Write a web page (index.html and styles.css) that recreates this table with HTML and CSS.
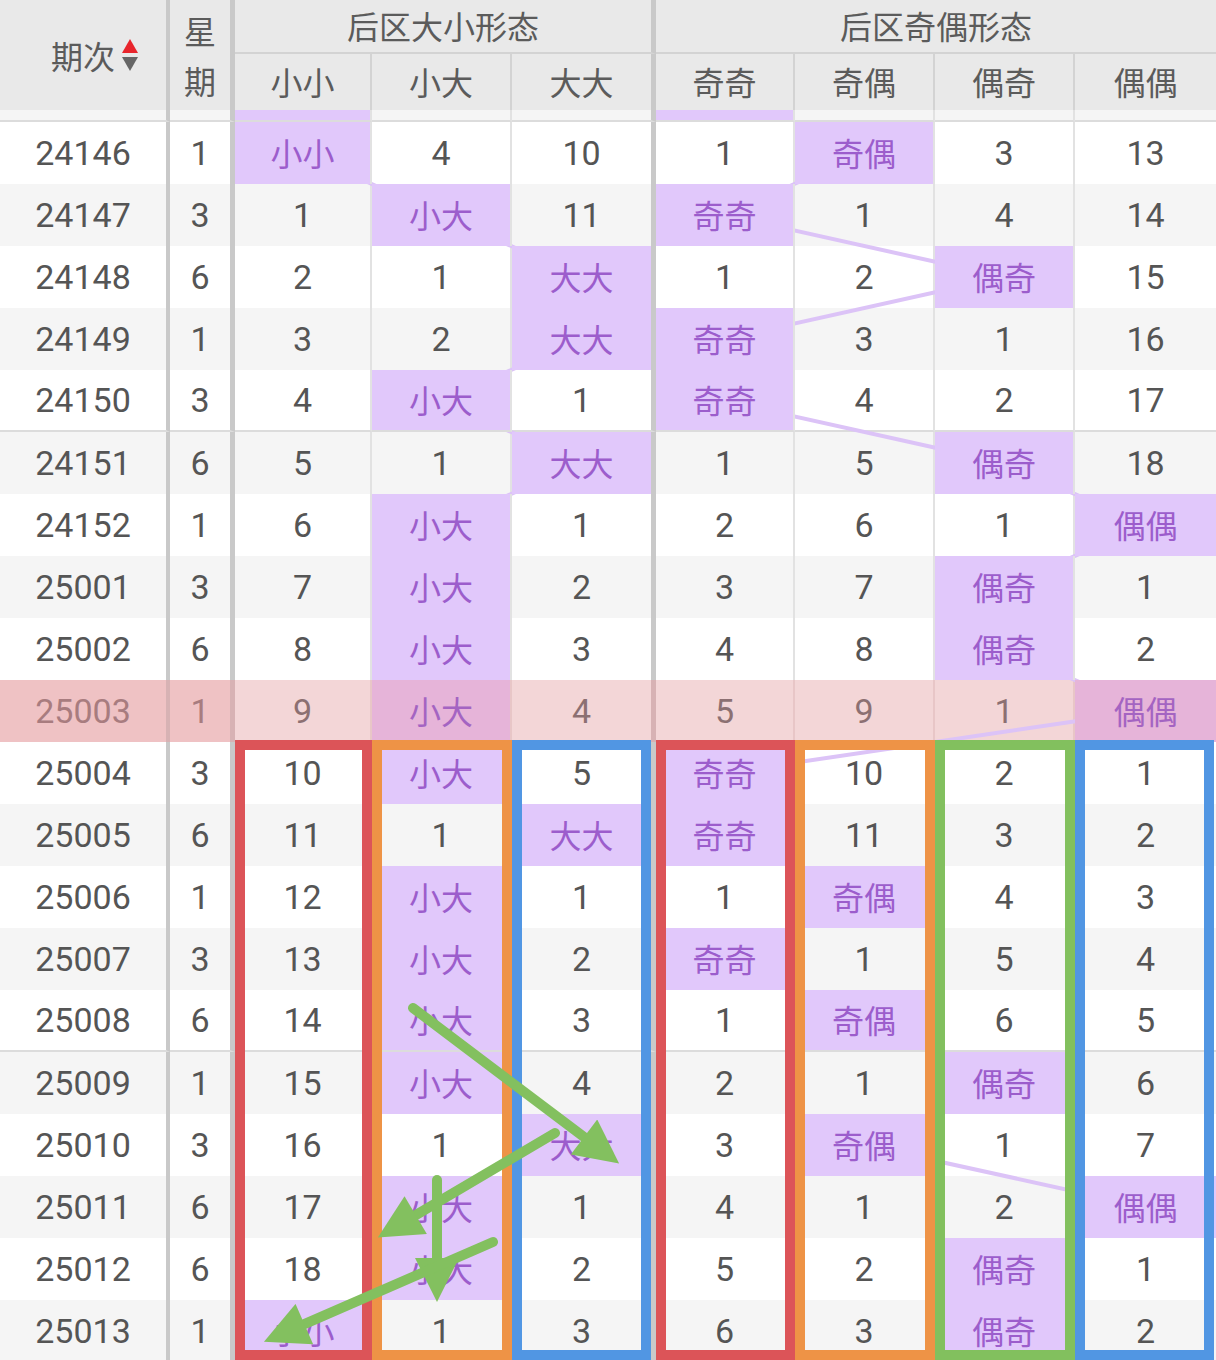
FILE: index.html
```html
<!DOCTYPE html>
<html lang="zh">
<head>
<meta charset="utf-8">
<title>后区形态走势</title>
<link rel="stylesheet" href="styles.css">
</head>
<body>
<div class="table">
  <div class="head">
    <div class="h h-id"><span>期次</span>
      <svg class="sort" width="18" height="36" viewBox="0 0 18 36"><polygon points="9,1 17,15 1,15" fill="#e8252c"/><polygon points="1,19 17,19 9,33" fill="#666"/></svg>
    </div>
    <div class="h h-wk"><span>星<br>期</span></div>
    <div class="h g1">后区大小形态</div>
    <div class="h g2">后区奇偶形态</div>
    <div class="h s thin">小小</div>
    <div class="h s thin">小大</div>
    <div class="h s thick">大大</div>
    <div class="h s thin">奇奇</div>
    <div class="h s thin">奇偶</div>
    <div class="h s thin">偶奇</div>
    <div class="h s">偶偶</div>
  </div>

  <div class="body">
    <div class="row strip alt div"><div class="c"></div><div class="c"></div><div class="c hit"></div><div class="c"></div><div class="c"></div><div class="c hit"></div><div class="c"></div><div class="c"></div><div class="c"></div></div>

    <div class="row"><div class="c">24146</div><div class="c">1</div><div class="c hit">小小</div><div class="c">4</div><div class="c">10</div><div class="c">1</div><div class="c hit">奇偶</div><div class="c">3</div><div class="c">13</div></div>
    <div class="row alt"><div class="c">24147</div><div class="c">3</div><div class="c">1</div><div class="c hit">小大</div><div class="c">11</div><div class="c hit">奇奇</div><div class="c">1</div><div class="c">4</div><div class="c">14</div></div>
    <div class="row"><div class="c">24148</div><div class="c">6</div><div class="c">2</div><div class="c">1</div><div class="c hit">大大</div><div class="c">1</div><div class="c">2</div><div class="c hit">偶奇</div><div class="c">15</div></div>
    <div class="row alt"><div class="c">24149</div><div class="c">1</div><div class="c">3</div><div class="c">2</div><div class="c hit">大大</div><div class="c hit">奇奇</div><div class="c">3</div><div class="c">1</div><div class="c">16</div></div>
    <div class="row div"><div class="c">24150</div><div class="c">3</div><div class="c">4</div><div class="c hit">小大</div><div class="c">1</div><div class="c hit">奇奇</div><div class="c">4</div><div class="c">2</div><div class="c">17</div></div>
    <div class="row alt"><div class="c">24151</div><div class="c">6</div><div class="c">5</div><div class="c">1</div><div class="c hit">大大</div><div class="c">1</div><div class="c">5</div><div class="c hit">偶奇</div><div class="c">18</div></div>
    <div class="row"><div class="c">24152</div><div class="c">1</div><div class="c">6</div><div class="c hit">小大</div><div class="c">1</div><div class="c">2</div><div class="c">6</div><div class="c">1</div><div class="c hit">偶偶</div></div>
    <div class="row alt"><div class="c">25001</div><div class="c">3</div><div class="c">7</div><div class="c hit">小大</div><div class="c">2</div><div class="c">3</div><div class="c">7</div><div class="c hit">偶奇</div><div class="c">1</div></div>
    <div class="row"><div class="c">25002</div><div class="c">6</div><div class="c">8</div><div class="c hit">小大</div><div class="c">3</div><div class="c">4</div><div class="c">8</div><div class="c hit">偶奇</div><div class="c">2</div></div>
    <div class="row hl"><div class="c">25003</div><div class="c">1</div><div class="c">9</div><div class="c hit">小大</div><div class="c">4</div><div class="c">5</div><div class="c">9</div><div class="c">1</div><div class="c hit">偶偶</div></div>
    <div class="row"><div class="c">25004</div><div class="c">3</div><div class="c">10</div><div class="c hit">小大</div><div class="c">5</div><div class="c hit">奇奇</div><div class="c">10</div><div class="c">2</div><div class="c">1</div></div>
    <div class="row alt"><div class="c">25005</div><div class="c">6</div><div class="c">11</div><div class="c">1</div><div class="c hit">大大</div><div class="c hit">奇奇</div><div class="c">11</div><div class="c">3</div><div class="c">2</div></div>
    <div class="row"><div class="c">25006</div><div class="c">1</div><div class="c">12</div><div class="c hit">小大</div><div class="c">1</div><div class="c">1</div><div class="c hit">奇偶</div><div class="c">4</div><div class="c">3</div></div>
    <div class="row alt"><div class="c">25007</div><div class="c">3</div><div class="c">13</div><div class="c hit">小大</div><div class="c">2</div><div class="c hit">奇奇</div><div class="c">1</div><div class="c">5</div><div class="c">4</div></div>
    <div class="row div"><div class="c">25008</div><div class="c">6</div><div class="c">14</div><div class="c hit">小大</div><div class="c">3</div><div class="c">1</div><div class="c hit">奇偶</div><div class="c">6</div><div class="c">5</div></div>
    <div class="row alt"><div class="c">25009</div><div class="c">1</div><div class="c">15</div><div class="c hit">小大</div><div class="c">4</div><div class="c">2</div><div class="c">1</div><div class="c hit">偶奇</div><div class="c">6</div></div>
    <div class="row"><div class="c">25010</div><div class="c">3</div><div class="c">16</div><div class="c">1</div><div class="c hit">大大</div><div class="c">3</div><div class="c hit">奇偶</div><div class="c">1</div><div class="c">7</div></div>
    <div class="row alt"><div class="c">25011</div><div class="c">6</div><div class="c">17</div><div class="c hit">小大</div><div class="c">1</div><div class="c">4</div><div class="c">1</div><div class="c">2</div><div class="c hit">偶偶</div></div>
    <div class="row"><div class="c">25012</div><div class="c">6</div><div class="c">18</div><div class="c hit">小大</div><div class="c">2</div><div class="c">5</div><div class="c">2</div><div class="c hit">偶奇</div><div class="c">1</div></div>
    <div class="row alt"><div class="c">25013</div><div class="c">1</div><div class="c hit">小小</div><div class="c">1</div><div class="c">3</div><div class="c">6</div><div class="c">3</div><div class="c hit">偶奇</div><div class="c">2</div></div>

    <svg class="links" width="1216" height="1252" viewBox="0 0 1216 1252">
      <polyline class="link" points="302.5,43 441,105 581.5,167 581.5,229 441,291 581.5,353 441,415 441,477 441,539 441,601 441,663 581.5,725 441,787 441,849 441,911 441,973 581.5,1035 441,1097 441,1159 302.5,1221"/>
      <polyline class="link" points="864,43 724.5,105 1004,167 724.5,229 724.5,291 1004,353 1145.5,415 1004,477 1004,539 1145.5,601 724.5,663 724.5,725 864,787 724.5,849 864,911 1004,973 864,1035 1145.5,1097 1004,1159 1004,1221"/>
    </svg>

    <div class="frame f1"></div>
    <div class="frame f2"></div>
    <div class="frame f3"></div>
    <div class="frame f4"></div>
    <div class="frame f5"></div>
    <div class="frame f6"></div>
    <div class="frame f7"></div>

    <svg class="arrows" width="1216" height="1252" viewBox="0 0 1216 1252">
      <defs>
        <marker id="ah" viewBox="0 0 10 10" refX="0" refY="5" markerWidth="45" markerHeight="44" markerUnits="userSpaceOnUse" orient="auto">
          <path d="M0,0 L10,5 L0,10 z" fill="#83c05f"/>
        </marker>
      </defs>
      <line class="arrow" x1="413" y1="898" x2="584" y2="1027" marker-end="url(#ah)"/>
      <line class="arrow" x1="555" y1="1023" x2="415.7" y2="1105.1" marker-end="url(#ah)"/>
      <line class="arrow" x1="437" y1="1070" x2="437" y2="1148" marker-end="url(#ah)"/>
      <line class="arrow" x1="493" y1="1132" x2="304.3" y2="1214.1" marker-end="url(#ah)"/>
    </svg>
  </div>
</div>
</body>
</html>
```

FILE: styles.css
```css
:root {
  --cols: 170px 65px 137px 140px 144px 139px 140px 140px 141px;
  --thick: #c9c9c9;
  --thin: #e2e2e2;
}

* {
  box-sizing: border-box;
  margin: 0;
  padding: 0;
}

html, body {
  overflow: hidden;
  background: #fff;
}

body {
  width: 1216px;
  height: 1360px;
  font-family: Roboto, "Noto Sans CJK SC", sans-serif;
  color: #555;
}

.table {
  width: 1216px;
  height: 1360px;
  overflow: hidden;
}

/* ---------- header ---------- */
.head {
  display: grid;
  grid-template-columns: var(--cols);
  grid-template-rows: 54px 56px;
  background: #e9e9e9;
  color: #5b5b5b;
  font-family: "Noto Sans CJK SC", sans-serif;
  font-size: 32px;
  position: relative;
  z-index: 10;
}

.h {
  display: flex;
  align-items: center;
  justify-content: center;
}

.h-id {
  grid-row: 1 / 3;
  grid-column: 1;
  border-right: 4px solid var(--thick);
  padding-left: 24px;
  gap: 6px;
}

.sort {
  display: block;
  margin-top: 2px;
}

.h-wk {
  grid-row: 1 / 3;
  grid-column: 2;
  border-right: 5px solid var(--thick);
  line-height: 50px;
  text-align: center;
}

.g1 {
  grid-row: 1;
  grid-column: 3 / 6;
  border-right: 5px solid var(--thick);
  border-bottom: 2px solid #d3d3d3;
  padding-bottom: 2px;
}

.g2 {
  grid-row: 1;
  grid-column: 6 / 10;
  border-bottom: 2px solid #d3d3d3;
  padding-bottom: 2px;
}

.s {
  grid-row: 2;
  padding-bottom: 2px;
}

.s.thin {
  border-right: 2px solid #d3d3d3;
}

.s.thick {
  border-right: 5px solid var(--thick);
}

/* ---------- body ---------- */
.body {
  position: relative;
}

.row {
  display: grid;
  grid-template-columns: var(--cols);
  height: 62px;
}

.row.strip {
  height: 12px;
}

.c {
  display: flex;
  align-items: center;
  justify-content: center;
  font-size: 34px;
  background: #fff;
  border-right: 2px solid var(--thin);
}

.row.alt .c {
  background: #f5f5f5;
}

.c:nth-child(1) {
  border-right: 4px solid var(--thick);
}

.c:nth-child(2),
.c:nth-child(5) {
  border-right: 5px solid var(--thick);
}

.c:nth-child(9) {
  border-right: 0;
}

.row.div .c {
  border-bottom: 2px solid #dcdcdc;
}

.row .c.hit,
.row.alt .c.hit {
  background: #e1c8fb;
  color: #9c5dcc;
  font-family: "Noto Sans CJK SC", sans-serif;
  font-size: 32px;
  padding-bottom: 3px;
  position: relative;
  z-index: 2;
}

/* highlighted (current) row */
.row.hl .c {
  background: #f3d6d7;
  color: #8c7072;
  border-right-color: #e8c6c7;
}

.row.hl .c:nth-child(1),
.row.hl .c:nth-child(2) {
  background: #efc2c4;
  color: #a87c7f;
}

.row.hl .c:nth-child(1),
.row.hl .c:nth-child(2),
.row.hl .c:nth-child(5) {
  border-right-color: #d7b2b4;
}

.row.hl .c.hit {
  background: #e6b4d9;
  color: #a464c2;
}

/* connecting lines */
.links {
  position: absolute;
  left: 0;
  top: 0;
  z-index: 1;
  pointer-events: none;
}

.link {
  fill: none;
  stroke: #dcc3f7;
  stroke-width: 4;
}

/* coloured column frames */
.frame {
  position: absolute;
  top: 630px;
  height: 620px;
  border: 10px solid;
  z-index: 3;
}

.f1 { left: 235px;  width: 137px; border-color: #dc5458; }
.f2 { left: 372px;  width: 140px; border-color: #ee9346; }
.f3 { left: 512px;  width: 139px; border-color: #5196e3; }
.f4 { left: 656px;  width: 139px; border-color: #dc5458; }
.f5 { left: 795px;  width: 140px; border-color: #ee9346; }
.f6 { left: 935px;  width: 140px; border-color: #82c05e; }
.f7 { left: 1075px; width: 139px; border-color: #5196e3; }

/* hand-drawn arrows */
.arrows {
  position: absolute;
  left: 0;
  top: 0;
  z-index: 4;
  pointer-events: none;
}

.arrow {
  stroke: #83c05f;
  stroke-width: 10;
  stroke-linecap: round;
}
```
